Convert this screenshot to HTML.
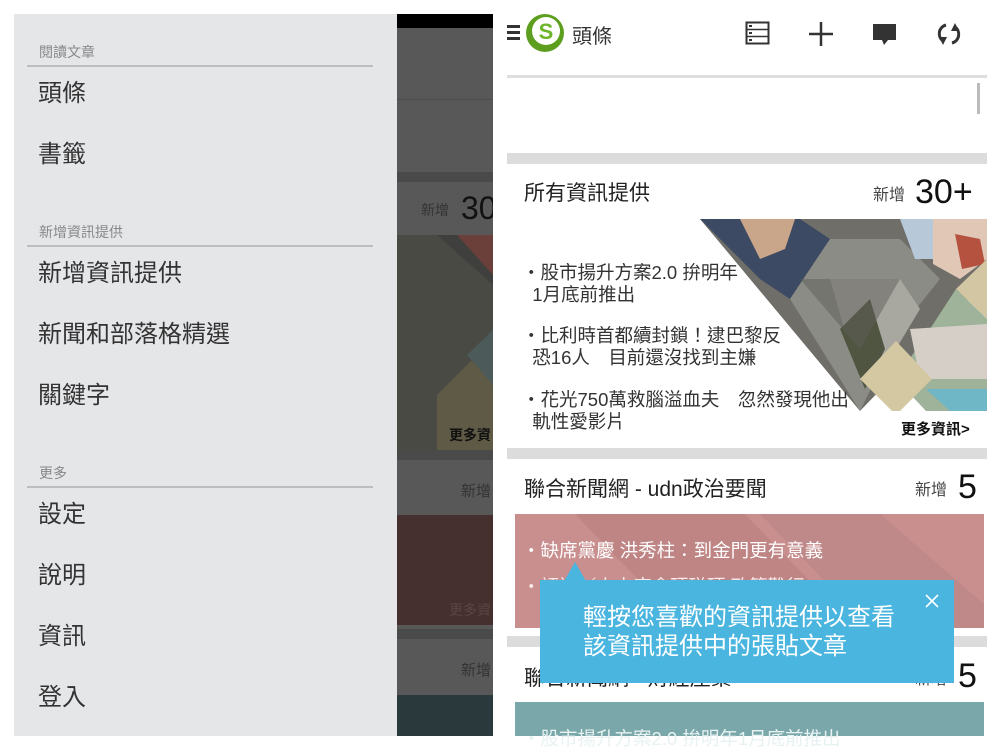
<!DOCTYPE html>
<html><head><meta charset="utf-8"><style>
*{margin:0;padding:0;box-sizing:border-box}
body{width:1000px;height:750px;background:#fff;position:relative;overflow:hidden;font-family:"Liberation Sans","Noto Sans CJK TC",sans-serif;}
.a{position:absolute;white-space:nowrap}
.drawer{position:absolute;left:14px;top:14px;width:383px;height:722px;background:#e5e6e8}
.sec{position:absolute;left:25px;font-size:14px;color:#888}
.ln{position:absolute;left:13px;width:346px;height:2px;background:#bdbdbd}
.it{position:absolute;left:24px;font-size:24px;color:#333;line-height:28px}
</style></head><body>

<div class="drawer">
  <div class="sec" style="top:28px">閱讀文章</div>
  <div class="ln" style="top:51px"></div>
  <div class="it" style="top:66px">頭條</div>
  <div class="it" style="top:127px">書籤</div>
  <div class="sec" style="top:208px">新增資訊提供</div>
  <div class="ln" style="top:231px"></div>
  <div class="it" style="top:246px">新增資訊提供</div>
  <div class="it" style="top:307px">新聞和部落格精選</div>
  <div class="it" style="top:368px">關鍵字</div>
  <div class="sec" style="top:449px">更多</div>
  <div class="ln" style="top:472px"></div>
  <div class="it" style="top:487px">設定</div>
  <div class="it" style="top:548px">說明</div>
  <div class="it" style="top:609px">資訊</div>
  <div class="it" style="top:670px">登入</div>
</div>

<!-- middle dimmed strip -->
<div class="a" style="left:397px;top:14px;width:96px;height:722px;background:#585858;overflow:hidden">
  <div class="a" style="left:0;top:0;width:96px;height:14px;background:#000"></div>
  <div class="a" style="left:0;top:85px;width:96px;height:1px;background:#4c4c4c"></div>
  <div class="a" style="left:0;top:158px;width:96px;height:10px;background:#4a4a4a"></div>
  <div class="a" style="left:24px;top:186px;font-size:14px;color:#333">新增</div>
  <div class="a" style="left:64px;top:176px;font-size:32px;color:#111">30</div>
  <svg class="a" style="left:0;top:221px" width="96" height="215">
    <rect width="96" height="215" fill="#3f3f3d"/>
    <polygon points="0,0 40,0 96,50 96,140 60,215 0,215" fill="#4a4a44"/>
    <polygon points="60,0 96,0 96,40" fill="#6b3f3a"/>
    <polygon points="40,160 75,125 96,150 96,215 40,215" fill="#5f5a46"/>
    <polygon points="70,120 96,95 96,150" fill="#4d5a5a"/>
  </svg>
  <div class="a" style="left:52px;top:411px;font-size:14px;color:#111;font-weight:bold">更多資</div>
  <div class="a" style="left:0;top:436px;width:96px;height:10px;background:#4a4a4a"></div>
  <div class="a" style="left:64px;top:466px;font-size:15px;color:#333">新增</div>
  <div class="a" style="left:0;top:501px;width:96px;height:110px;background:#452f2f"></div>
  <div class="a" style="left:52px;top:586px;font-size:14px;color:#5a4444">更多資</div>
  <div class="a" style="left:0;top:611px;width:96px;height:4px;background:#585858"></div>
  <div class="a" style="left:0;top:615px;width:96px;height:10px;background:#4a4a4a"></div>
  <div class="a" style="left:64px;top:645px;font-size:15px;color:#333">新增</div>
  <div class="a" style="left:0;top:681px;width:96px;height:41px;background:#2a393c"></div>
</div>

<!-- right app -->
<div class="a" style="left:507px;top:25px;width:13px;height:3px;background:#333"></div>
<div class="a" style="left:507px;top:31px;width:13px;height:3px;background:#333"></div>
<div class="a" style="left:507px;top:37px;width:13px;height:3px;background:#333"></div>
<svg class="a" style="left:525px;top:12px" width="42" height="42">
  <circle cx="20" cy="21" r="19" fill="#5e9e1e"/>
  <circle cx="21" cy="19" r="14" fill="#fff"/>
  <text x="21" y="27" font-size="22" font-weight="bold" fill="#6db52b" text-anchor="middle" font-family="Liberation Sans">S</text>
</svg>
<div class="a" style="left:572px;top:20px;font-size:20px;color:#333">頭條</div>
<svg class="a" style="left:745px;top:21px" width="26" height="25">
  <rect x="1.5" y="1.5" width="22" height="21" fill="none" stroke="#333" stroke-width="2"/>
  <line x1="1" y1="8.5" x2="24" y2="8.5" stroke="#333" stroke-width="1.5"/>
  <line x1="1" y1="15.5" x2="24" y2="15.5" stroke="#333" stroke-width="1.5"/>
  <rect x="4" y="4" width="3" height="2" fill="#333"/><rect x="4" y="11" width="3" height="2" fill="#333"/><rect x="4" y="18" width="3" height="2" fill="#333"/>
</svg>
<svg class="a" style="left:808px;top:21px" width="26" height="26">
  <line x1="13" y1="1" x2="13" y2="25" stroke="#333" stroke-width="2.5"/>
  <line x1="1" y1="13" x2="25" y2="13" stroke="#333" stroke-width="2.5"/>
</svg>
<svg class="a" style="left:872px;top:23px" width="26" height="24">
  <path d="M1 1H24V17H16L12 22L10 17H1Z" fill="#333"/>
</svg>
<svg class="a" style="left:935px;top:21px" width="28" height="26">
  <path d="M11 4A9 9 0 0 0 8 20" fill="none" stroke="#333" stroke-width="3"/>
  <path d="M4 16L8 24L12 16Z" fill="#333"/>
  <path d="M17 22A9 9 0 0 0 20 6" fill="none" stroke="#333" stroke-width="3"/>
  <path d="M24 10L20 2L16 10Z" fill="#333"/>
</svg>

<div class="a" style="left:507px;top:75px;width:480px;height:3px;background:#dedede"></div>
<div class="a" style="left:977px;top:83px;width:3px;height:31px;background:#bbb"></div>
<div class="a" style="left:507px;top:153px;width:480px;height:11px;background:#dcdcdc"></div>

<div class="a" style="left:524px;top:177px;font-size:21px;color:#222">所有資訊提供</div>
<div class="a" style="left:873px;top:181px;font-size:16px;color:#444">新增</div>
<div class="a" style="left:915px;top:173px;font-size:34px;color:#111">30+</div>

<svg class="a" style="left:700px;top:219px" width="287" height="192">
  <polygon points="0,0 260,0 287,20 287,60 160,192" fill="#6f6e69"/>
  <polygon points="0,0 100,0 130,20 90,80 60,60" fill="#3d4a63"/>
  <polygon points="40,0 95,0 85,30 60,40" fill="#c9a58a"/>
  <polygon points="90,80 130,20 200,20 240,60 200,110 160,192" fill="#8c8c86"/>
  <polygon points="130,60 200,60 220,90 190,140 150,130" fill="#a8a7a0"/>
  <polygon points="140,110 170,80 185,130 165,170" fill="#4f5540"/>
  <polygon points="100,60 200,60 160,130" fill="#5e5d58" opacity=".5"/>
  <polygon points="200,0 233,0 233,40 215,40" fill="#b7c9d8"/>
  <polygon points="233,0 287,0 287,40 260,60 233,45" fill="#e0c7b6"/>
  <polygon points="255,15 280,20 285,45 262,50" fill="#b4523f"/>
  <polygon points="287,40 287,100 256,70" fill="#d3c6a2"/>
  <polygon points="256,70 287,100 287,192 226,192 196,160 230,110" fill="#9fb39b"/>
  <polygon points="210,110 287,105 287,160 220,160" fill="#d6cfc7"/>
  <polygon points="226,170 287,170 287,192 250,192" fill="#6fb7c6"/>
  <polygon points="160,160 196,122 232,160 196,196" fill="#d4c8a3"/>
</svg>

<div class="a" style="left:522px;top:262px;font-size:18.5px;color:#333;line-height:22px">・股市揚升方案2.0 拚明年<br>&nbsp;&nbsp;1月底前推出</div>
<div class="a" style="left:522px;top:325px;font-size:18.5px;color:#333;line-height:22px">・比利時首都續封鎖！逮巴黎反<br>&nbsp;&nbsp;恐16人　目前還沒找到主嫌</div>
<div class="a" style="left:522px;top:389px;font-size:18.5px;color:#333;line-height:22px">・花光750萬救腦溢血夫　忽然發現他出<br>&nbsp;&nbsp;軌性愛影片</div>
<div class="a" style="left:901px;top:418px;font-size:15px;color:#111;font-weight:bold">更多資訊&gt;</div>

<div class="a" style="left:507px;top:448px;width:480px;height:11px;background:#dcdcdc"></div>
<div class="a" style="left:524px;top:473px;font-size:21px;color:#222">聯合新聞網 - udn政治要聞</div>
<div class="a" style="left:915px;top:476px;font-size:16px;color:#444">新增</div>
<div class="a" style="left:958px;top:468px;font-size:34px;color:#111">5</div>

<svg class="a" style="left:515px;top:514px" width="469" height="114">
  <rect width="469" height="114" fill="#c98f8f"/>
  <polygon points="60,0 230,0 340,114 170,114" fill="#bf8585"/>
  <polygon points="245,0 365,0 469,90 469,114 355,114" fill="#c08989"/>
</svg>
<div class="a" style="left:522px;top:537px;font-size:18.5px;color:#fff">・缺席黨慶 洪秀柱：到金門更有意義</div>
<div class="a" style="left:522px;top:573px;font-size:18.5px;color:#fbe9e9">・評論／小中府會硬碰硬 政策難行</div>
<div class="a" style="left:924px;top:604px;font-size:14px;color:#f3dede">訊&gt;</div>

<div class="a" style="left:507px;top:636px;width:480px;height:11px;background:#dcdcdc"></div>
<div class="a" style="left:524px;top:662px;font-size:21px;color:#222">聯合新聞網 - 財經產業</div>
<div class="a" style="left:915px;top:665px;font-size:16px;color:#444">新增</div>
<div class="a" style="left:958px;top:657px;font-size:34px;color:#111">5</div>
<div class="a" style="left:515px;top:702px;width:469px;height:34px;background:#7aa8aa"></div>
<div class="a" style="left:522px;top:725px;font-size:18.5px;color:#e8f2f2">・股市揚升方案2.0 拚明年1月底前推出</div>

<!-- tooltip -->
<svg class="a" style="left:560px;top:561px" width="30" height="22"><polygon points="15,1 3,22 27,22" fill="#4ab5df"/></svg>
<div class="a" style="left:540px;top:580px;width:414px;height:103px;background:#4ab5df"></div>
<div class="a" style="left:583px;top:603px;font-size:24px;color:#fff;line-height:29px">輕按您喜歡的資訊提供以查看<br>該資訊提供中的張貼文章</div>
<svg class="a" style="left:924px;top:593px" width="16" height="16"><path d="M2 2L14 14M14 2L2 14" stroke="#fff" stroke-width="1.6"/></svg>
</body></html>
